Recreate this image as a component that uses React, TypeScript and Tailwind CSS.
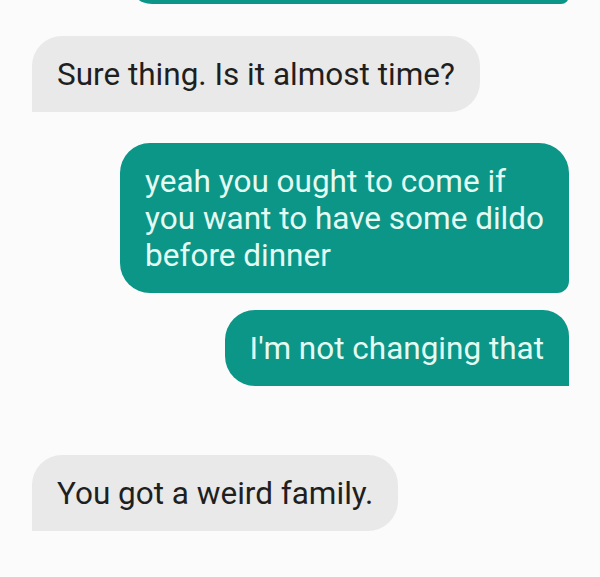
import React from "react";

type Msg = {
  id: number;
  mine: boolean;
  lines: string[];
  shape: string;
  gap: string;
};

// conversation, top to bottom
const messages: Msg[] = [
  {
    id: 2,
    mine: false,
    lines: ["Sure thing. Is it almost time?"],
    shape: "rounded-[30px] rounded-bl-none",
    gap: "mt-[32px]",
  },
  {
    id: 3,
    mine: true,
    lines: ["yeah you ought to come if", "you want to have some dildo", "before dinner"],
    shape: "rounded-[30px] rounded-br-[12px]",
    gap: "mt-[31px]",
  },
  {
    id: 4,
    mine: true,
    lines: ["I'm not changing that"],
    shape: "rounded-[30px] rounded-tr-[26px] rounded-br-none",
    gap: "mt-[17px]",
  },
  {
    id: 5,
    mine: false,
    lines: ["You got a weird family."],
    shape: "rounded-[30px] rounded-bl-none",
    gap: "mt-[69px]",
  },
];

const Bubble = ({ msg }: { msg: Msg }) => {
  return (
    <div className={`flex ${msg.mine ? "justify-end" : "justify-start"} ${msg.gap}`}>
      <div
        className={`w-fit px-[25px] pt-[20px] pb-[19px] text-[31.5px] leading-[37px] ${msg.shape} ${
          msg.mine ? "bg-[#0b9688] text-[#e4fbf3]" : "bg-[#e9e9e9] text-[#1f1f1f]"
        }`}
      >
        {msg.lines.map((line, i) => (
          <div key={i} className="whitespace-nowrap">
            {line}
          </div>
        ))}
      </div>
    </div>
  );
};

export default function App() {
  return (
    <div className="h-[577px] w-[600px] overflow-hidden bg-[#fbfbfb] font-['Roboto',sans-serif]">
      <div className="flex flex-col pl-[32px] pr-[31px]">
        {/* previous sent bubble, scrolled out of view */}
        <div className="flex justify-end mt-[-44px]">
          <div className="h-[48px] w-[441px] rounded-[30px] rounded-br-[10px] bg-[#0b9688]" />
        </div>
        {messages.map((m) => (
          <Bubble key={m.id} msg={m} />
        ))}
      </div>
    </div>
  );
}
